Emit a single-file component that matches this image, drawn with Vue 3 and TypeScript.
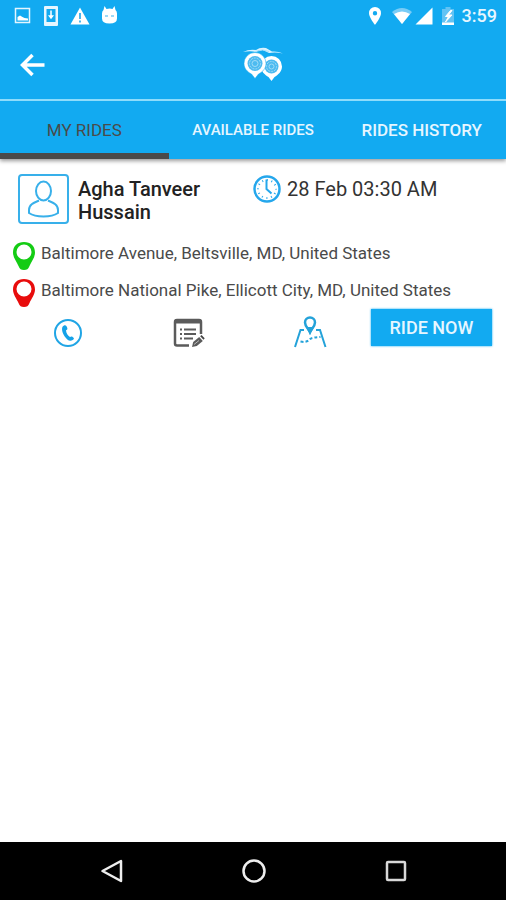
<script setup lang="ts">
import { ref } from 'vue'

interface Tab {
  id: string
  label: string
  size: 'small' | 'regular'
}

interface Stop {
  kind: 'pickup' | 'dropoff'
  address: string
}

interface Ride {
  driver: string
  time: string
  stops: Stop[]
}

const tabs: Tab[] = [
  { id: 'mine', label: 'MY RIDES', size: 'regular' },
  { id: 'available', label: 'AVAILABLE RIDES', size: 'small' },
  { id: 'history', label: 'RIDES HISTORY', size: 'regular' },
]

const activeTab = ref('mine')

const rides: Ride[] = [
  {
    driver: 'Agha Tanveer Hussain',
    time: '28 Feb 03:30 AM',
    stops: [
      { kind: 'pickup', address: 'Baltimore Avenue, Beltsville, MD, United States' },
      { kind: 'dropoff', address: 'Baltimore National Pike, Ellicott City, MD, United States' },
    ],
  },
]
</script>

<template>
  <div class="screen">
    <header class="top">
      <div class="status">
        <div class="status-group status-left">
          <svg width="18" height="20" viewBox="0 0 18 20">
            <rect x="1.5" y="2.5" width="14" height="14" fill="none" stroke="#e3f5ff" stroke-width="1.5" />
            <path d="M3.5 14.5V11l2.500-1.500 2.500 1.500 2 1 3.500.500v2z" fill="#fff" />
          </svg>
          <svg width="16" height="22" viewBox="0 0 16 22">
            <path fill="#e6f6ff" fill-rule="evenodd" d="M2 1h12q1 0 1 1v18q0 1-1 1H2q-1 0-1-1V2q0-1 1-1zM3.500 4v13h9V4z" />
            <path d="M8 5.500v6M6.500 11h3L8 13z" fill="#fff" stroke="#fff" stroke-width="1.500" />
          </svg>
          <svg width="20" height="20" viewBox="0 0 20 20">
            <path d="M10 1.500 19.500 18.500H.500z" fill="#fff" />
            <path d="M10 7v6M10 14.500v2" stroke="#49b7ee" stroke-width="2" />
          </svg>
          <svg width="18" height="20" viewBox="0 0 18 20">
            <path d="M3.500 0 5.500 3Q9 2 11.500 3L13.500 0l1 4q1.500 1 1.500 3.500v5q0 5-7.500 5T1 12.500v-5Q1 5 2.500 4z" fill="#fff" />
            <path d="M4 10h3M10 10h3" stroke="#7ccbf3" stroke-width="1.500" />
          </svg>
        </div>
        <div class="status-group status-right">
          <svg class="place" width="14" height="20" viewBox="0 0 14 20">
            <path fill="#fff" fill-rule="evenodd" d="M7 1a6 6 0 0 1 6 6.300C13 11.500 7 19 7 19S1 11.500 1 7.300A6 6 0 0 1 7 1zm0 4a2.200 2.200 0 1 0 0 4.400A2.200 2.200 0 0 0 7 5z" />
          </svg>
          <svg width="22" height="18" viewBox="0 0 22 18">
            <path d="M1 5Q11-3 21 5L11 17z" fill="#79ccf6" />
            <path d="M3 7Q11 2 19 7L11 17z" fill="#fff" />
          </svg>
          <svg width="18" height="18" viewBox="0 0 18 18"><path d="M17.500.500v17H.500z" fill="#fff" /></svg>
          <svg class="battery" width="14" height="20" viewBox="0 0 14 20">
            <path d="M4.500 1h5v2H13v16H1V3h3.500z" fill="#62c3f4" />
            <path d="M1 16.500h12V19H1z" fill="#fff" />
            <path d="M9.500 4.500 4.500 10.500h3l-3 5.500 6.500-7H7.500l3.500-4.500z" fill="#fff" stroke="#fff" />
          </svg>
          <span class="clock">3:59</span>
        </div>
      </div>

      <div class="bar">
        <button class="back" type="button" aria-label="Back">
          <svg width="26" height="24" viewBox="0 0 26 24">
            <path d="M24.500 12H3M12.500 2 2.500 12l10 10" fill="none" stroke="#fff" stroke-width="3.500" />
          </svg>
        </button>
        <svg class="logo" width="44" height="38" viewBox="0 0 44 38">
          <path d="M2 6Q8 3 15 4q4-3 10-2l6 3.500q6-.500 11 2-7-1.500-14-.500L22 4q-5 0-7 2Q9 4.500 2 6z" fill="#d9f3ff" />
          <path d="M14 5.500q8-3 14 0" fill="none" stroke="#a8e0fb" />
          <path d="M30.500 10A10.500 10.500 0 0 1 41 20.500c0 5-4 8.500-7.500 10.500l-3 4-3-4C24 29 20 25.500 20 20.500A10.500 10.500 0 0 1 30.500 10z" fill="#fff" />
          <circle cx="30.500" cy="20.500" r="7" fill="#4dbbf0" />
          <circle cx="30.500" cy="20.500" r="5" fill="none" stroke="#a0dcf8" stroke-dasharray="2 1" />
          <circle cx="30.500" cy="20.500" r="2.500" fill="none" stroke="#a0dcf8" />
          <path d="M14 6.500A11 11 0 0 1 25 17.500c0 5-3.500 8.500-7.500 10.500L14 32.500 10.500 28C6.500 26 3 22.500 3 17.500a11 11 0 0 1 11-11z" fill="#fff" stroke="#12aaf1" stroke-width=".5" />
          <circle cx="14" cy="17.500" r="7.500" fill="#4dbbf0" />
          <circle cx="14" cy="17.500" r="5.500" fill="none" stroke="#a0dcf8" stroke-dasharray="2 1" />
          <circle cx="14" cy="17.500" r="3" fill="none" stroke="#a0dcf8" />
        </svg>
      </div>

      <nav class="tabs" role="tablist">
        <button
          v-for="tab in tabs"
          :key="tab.id"
          type="button"
          role="tab"
          class="tab"
          :class="[tab.size, { active: tab.id === activeTab }]"
          :aria-selected="tab.id === activeTab"
          @click="activeTab = tab.id"
        >
          {{ tab.label }}
        </button>
      </nav>
    </header>

    <main class="content">
      <article v-for="ride in rides" :key="ride.time" class="ride">
        <div class="summary">
          <div class="person">
            <svg class="avatar" width="51" height="50" viewBox="0 0 51 50" fill="none" stroke="#38b0ea">
              <rect x="1" y="1" width="49" height="48" rx="3" stroke-width="2" />
              <ellipse cx="25.500" cy="17" rx="7.500" ry="9.500" stroke-width="2" />
              <path d="M21 26.500C15 29 11 31 11 36v3q5 3.500 14.500 3.500T40 39v-3c0-5-4-7-10-9.500" stroke-width="2" />
            </svg>
            <h2 class="name">{{ ride.driver }}</h2>
          </div>
          <div class="when">
            <svg width="28" height="28" viewBox="0 0 28 28" fill="none" stroke="#25a7ec">
              <circle cx="14" cy="14" r="12.500" stroke-width="2.500" />
              <circle cx="14" cy="14" r="9" stroke-width="2" stroke-dasharray="1 3.712" stroke-dashoffset=".5" />
              <path d="M13.500 4.500V14l5 4.500" stroke-width="2" />
            </svg>
            <span>{{ ride.time }}</span>
          </div>
        </div>

        <ul class="stops">
          <li v-for="stop in ride.stops" :key="stop.kind" class="stop" :class="stop.kind">
            <svg class="pin" width="22" height="28" viewBox="0 0 22 28">
              <path fill="currentColor" fill-rule="evenodd" d="M11 0C17.500 0 22 4 22 10.500c0 5-3.500 9-5.500 13.500-1.300 3-2.500 4-5.500 4s-4.200-1-5.500-4C3.500 19.500 0 15.500 0 10.500 0 4 4.500 0 11 0zm0 2.500a7.500 7.500 0 1 0 0 15 7.500 7.500 0 0 0 0-15z" />
            </svg>
            <span>{{ stop.address }}</span>
          </li>
        </ul>

        <div class="actions">
          <button class="icon" type="button" aria-label="Call">
            <svg width="30" height="30" viewBox="0 0 30 30">
              <circle cx="15" cy="15" r="13" fill="none" stroke="#20a5e5" stroke-width="2" />
              <path d="M11 7.500c2-.700 3 1 3.400 3 .200 1-.900 1.500-1.400 2 .300 3 1.700 5 4 6.500.800-.400 1.400-1 2.400-.300 2 1.300 2 2.300.300 3.300-3 2-6-.500-8-3.500-2.400-3.500-4.200-9.500-.700-11z" fill="#15a2e8" />
            </svg>
          </button>
          <button class="icon" type="button" aria-label="Edit ride">
            <svg width="32" height="30" viewBox="0 0 32 30" fill="none" stroke="#5b5b5b">
              <path d="M16 27.500H4q-2 0-2-2V4q0-2 2-2h22q2 0 2 2v12" stroke-width="2.500" />
              <path d="M2 3.500h26" stroke-width="4" />
              <path d="M7 11.500h2M7 16h2M7 20.500h2M11 11.500h12M11 16h12M11 20.500h9" stroke-width="2" />
              <path d="m19 29 1.200-5 6-5 3.600 4-6 5z" fill="#5b5b5b" stroke="none" />
              <path d="m27.200 18.200 1.300-1.200 3.200 3.300-1.200 1.500z" fill="#444" stroke="none" />
              <path d="m21 26.500 5-4" stroke="#bbb" />
            </svg>
          </button>
          <button class="icon" type="button" aria-label="Show route">
            <svg width="34" height="34" viewBox="0 0 34 34" fill="none" stroke="#24a2d9">
              <path d="M11 14H7.500L2 31M23 14h4l5.500 17" stroke-width="2" />
              <path d="M17 1.500a5 5 0 0 1 5 5c0 4-3.500 6-5 9.500-1.500-3.500-5-5.500-5-9.500a5 5 0 0 1 5-5z" stroke-width="2.500" />
              <path d="M13 11h8l-4 8z" fill="#24a2d9" stroke="none" />
              <path d="M7.500 25.500c5 1 7 0 9-2s6-2 11-2.500" stroke-width="2" stroke-dasharray="3 2" />
            </svg>
          </button>
          <button class="ride-now" type="button">RIDE NOW</button>
        </div>
      </article>
    </main>

    <footer class="system">
      <button class="icon" type="button" aria-label="System back">
        <svg width="24" height="24" viewBox="0 0 24 24"><path d="M21 2v20L2.500 12z" fill="none" stroke="#eee" stroke-width="2.500" stroke-linejoin="round" /></svg>
      </button>
      <button class="icon" type="button" aria-label="Home">
        <svg width="24" height="24" viewBox="0 0 24 24"><circle cx="12" cy="12" r="10.500" fill="none" stroke="#eee" stroke-width="2.500" /></svg>
      </button>
      <button class="icon" type="button" aria-label="Recent apps">
        <svg width="24" height="24" viewBox="0 0 24 24"><rect x="3" y="3" width="18" height="18" rx="1" fill="none" stroke="#d8d8d8" stroke-width="2.500" /></svg>
      </button>
    </footer>
  </div>
</template>

<style>
body {
  margin: 0;
  background: #fff;
}
</style>

<style scoped>
.screen {
  display: flex;
  flex-direction: column;
  min-height: 100vh;
  font-family: Roboto, 'Liberation Sans', sans-serif;
  background: #fff;
}

button {
  margin: 0;
  padding: 0;
  border: 0;
  background: none;
  font-family: inherit;
  cursor: pointer;
}

svg {
  display: block;
  flex: none;
}

.top {
  background: #12aaf1;
  box-shadow: 0 2px 4px rgba(0, 0, 0, 0.4);
}

.status {
  display: flex;
  align-items: center;
  justify-content: space-between;
  height: 32px;
  padding: 0 9px 0 14px;
}

.status-group {
  display: flex;
  align-items: center;
}

.status-left {
  gap: 11px;
}

.status-right {
  gap: 2px;
}

.place {
  margin-right: 7px;
}

.battery {
  margin: 0 5px 0 6px;
}

.clock {
  font-size: 18px;
  font-weight: 500;
  line-height: 20px;
  color: #e6f6ff;
}

.bar {
  display: grid;
  grid-template-columns: 1fr auto 1fr;
  align-items: center;
  box-sizing: border-box;
  height: 69px;
  padding: 0 20px 2px;
  border-bottom: 2px solid #8edcfb;
}

.back {
  justify-self: start;
}

.logo {
  margin-left: 20px;
}

.tabs {
  display: grid;
  grid-template-columns: repeat(3, 1fr);
}

.tab {
  height: 58px;
  border-bottom: 6px solid transparent;
  border-top: 6px solid transparent;
  font-weight: 500;
  color: #e6f6ff;
  white-space: nowrap;
}

.regular {
  font-size: 17px;
}

.small {
  font-size: 15px;
}

.tab.active {
  border-bottom-color: #4a4a4a;
  font-weight: 400;
  color: #4a4a4a;
}

.content {
  flex: 1;
}

.ride {
  padding-top: 15px;
}

.summary {
  display: grid;
  grid-template-columns: 1fr 1fr;
  align-items: start;
}

.person {
  display: flex;
  gap: 9px;
  padding: 0 36px 0 18px;
}

.name {
  margin: 4px 0 0;
  font-size: 20px;
  font-weight: 500;
  line-height: 23px;
  color: #222;
}

.when {
  display: flex;
  align-items: center;
  gap: 6px;
  font-size: 20px;
  line-height: 30px;
  color: #333;
}

.stops {
  display: grid;
  gap: 9px;
  margin: 0;
  padding: 18px 13px 0;
  list-style: none;
}

.stop {
  display: flex;
  align-items: flex-start;
  gap: 6px;
  font-size: 17px;
  line-height: 22px;
}

.stop span {
  color: #4a4a4a;
}

.pickup {
  color: #14cc14;
}

.dropoff {
  color: #e80c0c;
}

.actions {
  display: grid;
  grid-template-columns: repeat(4, 1fr);
  align-items: center;
  padding: 2px 14px 0 7px;
}

.icon {
  justify-self: center;
}

.actions .icon {
  padding-top: 7px;
}

.ride-now {
  align-self: start;
  height: 37px;
  background: #12aaf1;
  box-shadow: 0 0 2px #12aaf1;
  font-size: 18px;
  font-weight: 500;
  color: #e6f6ff;
}

.system {
  display: grid;
  grid-template-columns: repeat(3, 1fr);
  align-items: center;
  height: 58px;
  padding: 0 39px 0 41px;
  background: #000;
}
</style>
